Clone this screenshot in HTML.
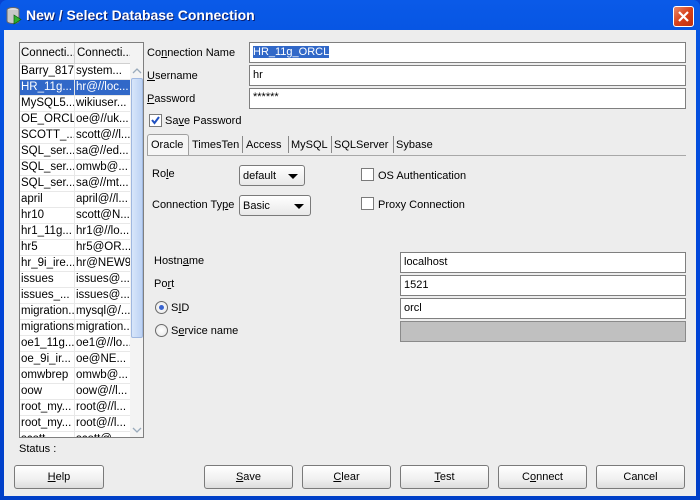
<!DOCTYPE html>
<html><head><meta charset="utf-8"><style>
*{margin:0;padding:0;box-sizing:border-box}
body{width:700px;height:500px;overflow:hidden;font-family:"Liberation Sans",sans-serif;font-size:11px;color:#000;background:#0842d0}
.win{position:absolute;left:0;top:0;width:700px;height:500px;background:linear-gradient(#0a5ae8,#0553e0 10%,#0044d8 60%,#0040c8);border-radius:7px 7px 0 0}
.title{position:absolute;left:26px;top:7px;color:#fff;font-weight:bold;font-size:14px;text-shadow:1px 1px 0 #0a1e6e}
.client{position:absolute;left:4px;top:30px;width:692px;height:466px;background:#ededed}
.a{position:absolute}
.inp{position:absolute;background:#fff;border:1px solid #7f7f7f;padding:0 3px;font-size:11px;line-height:19px}
.btn{position:absolute;top:465px;height:24px;border:1px solid #7a7a7a;border-radius:3px;background:linear-gradient(#fff,#f0f0f0 60%,#dcdcdc);text-align:center;line-height:22px;font-size:11px}
.list{position:absolute;left:19px;top:42px;width:125px;height:396px;border:1px solid #7f7f7f;background:#fff;overflow:hidden}
.row{position:absolute;left:0;width:110px;height:16px;font-size:11.5px;line-height:15px;border-bottom:1px solid #e8e8e8}
.row span{position:absolute;top:0;white-space:nowrap;overflow:hidden}
.c1{left:1px;width:53px}.c2{left:54px;width:56px;border-left:1px solid #e8e8e8;padding-left:1px}
.sel{background:#3168c8;color:#fff}
.cb{position:absolute;width:13px;height:13px;border:1px solid #7a7a7a;background:#fff}
.rb{position:absolute;width:13px;height:13px;border:1px solid #6a6a6a;border-radius:50%;background:radial-gradient(#fff,#e4e4e4)}
.combo{position:absolute;height:21px;border:1px solid #7a7a7a;border-radius:3px;background:linear-gradient(#fff,#e8e8e8);font-size:11px;padding-left:3px;line-height:21px}
.combo:after{content:"";position:absolute;right:6px;top:8px;border-left:5px solid transparent;border-right:5px solid transparent;border-top:5px solid #000}
.tab{position:absolute;top:139px;font-size:11px}
u{text-decoration:underline}
</style></head><body>
<div class="win"></div>
<svg class="a" style="left:5px;top:6px" width="18" height="20" viewBox="0 0 18 20"><ellipse cx="8" cy="4" rx="6" ry="2.5" fill="#ddd" stroke="#666"/><path d="M2 4v11c0 1.5 2.7 2.5 6 2.5s6-1 6-2.5V4" fill="#c8c8c8" stroke="#666"/><path d="M9 9l7 4.5-7 4.5z" fill="#2fb02f" stroke="#0a600a" stroke-width=".7"/></svg>
<div class="title">New / Select Database Connection</div>
<div class="a" style="left:673px;top:6px;width:21px;height:21px;border:1px solid #fff;border-radius:3px;background:linear-gradient(135deg,#e88a6a,#d8401a 50%,#c03010)"><svg width="19" height="19"><path d="M5 5l9 9M14 5l-9 9" stroke="#fff" stroke-width="2.2"/></svg></div>
<div class="client"></div>

<div class="list">
<div class="a" style="left:0;top:0;width:110px;height:21px;background:#f4f4f4;border-bottom:1px solid #d0d0d0;font-size:11.5px;line-height:21px"><span class="a" style="left:1px">Connecti...</span><span class="a" style="left:54px;top:0;height:21px;border-left:1px solid #d0d0d0;padding-left:2px">Connecti...</span></div>
<div class="a" style="left:110px;top:0;width:14px;height:396px;background:#f3f3f3"></div>
<div class="a" style="left:111px;top:35px;width:12px;height:260px;border:1px solid #a0b8e0;border-radius:2px;background:linear-gradient(90deg,#d8e6fa,#bcd2f4)"></div>
<svg class="a" style="left:112px;top:25px" width="10" height="6"><path d="M1 5l4-4 4 4" stroke="#9ab" fill="none" stroke-width="1.3"/></svg>
<svg class="a" style="left:112px;top:384px" width="10" height="6"><path d="M1 1l4 4 4-4" stroke="#9ab" fill="none" stroke-width="1.3"/></svg>
</div>

<div class="a" style="left:147px;top:47px">Co<u>n</u>nection Name</div>
<div class="inp" style="left:249px;top:42px;width:437px;height:21px"><span style="background:#3168c8;color:#fff">HR_11g_ORCL</span></div>
<div class="a" style="left:147px;top:70px"><u>U</u>sername</div>
<div class="inp" style="left:249px;top:65px;width:437px;height:21px">hr</div>
<div class="a" style="left:147px;top:93px"><u>P</u>assword</div>
<div class="inp" style="left:249px;top:88px;width:437px;height:21px;line-height:17px">******</div>
<div class="cb" style="left:149px;top:114px"><svg width="11" height="11"><path d="M2 5l2.5 3L9 2" stroke="#2050c0" stroke-width="2" fill="none"/></svg></div>
<div class="a" style="left:165px;top:115px">Sa<u>v</u>e Password</div>

<div class="a" style="left:147px;top:134px;width:42px;height:22px;border:1px solid #a0a0a0;border-bottom:none;border-radius:3px 3px 0 0;background:#f6f6f6"></div>
<div class="a" style="left:147px;top:155px;width:539px;height:1px;background:#a8a8a8"></div>
<div class="tab" style="left:151px">Oracle</div>
<div class="tab" style="left:192px">TimesTen</div>
<div class="a" style="left:242px;top:136px;width:1px;height:17px;background:#888"></div>
<div class="tab" style="left:246px">Access</div>
<div class="a" style="left:288px;top:136px;width:1px;height:17px;background:#888"></div>
<div class="tab" style="left:291px">MySQL</div>
<div class="a" style="left:331px;top:136px;width:1px;height:17px;background:#888"></div>
<div class="tab" style="left:334px">SQLServer</div>
<div class="a" style="left:393px;top:136px;width:1px;height:17px;background:#888"></div>
<div class="tab" style="left:396px">Sybase</div>

<div class="a" style="left:152px;top:168px">Ro<u>l</u>e</div>
<div class="combo" style="left:239px;top:165px;width:66px">default</div>
<div class="a" style="left:152px;top:199px">Connection Ty<u>p</u>e</div>
<div class="combo" style="left:239px;top:195px;width:72px">Basic</div>
<div class="cb" style="left:361px;top:168px"></div>
<div class="a" style="left:378px;top:170px">OS Authentication</div>
<div class="cb" style="left:361px;top:197px"></div>
<div class="a" style="left:378px;top:199px">Proxy Connection</div>

<div class="a" style="left:154px;top:255px">Hostn<u>a</u>me</div>
<div class="inp" style="left:400px;top:252px;width:286px;height:21px">localhost</div>
<div class="a" style="left:154px;top:278px">Po<u>r</u>t</div>
<div class="inp" style="left:400px;top:275px;width:286px;height:21px">1521</div>
<div class="rb" style="left:155px;top:301px"><div class="a" style="left:3px;top:3px;width:5px;height:5px;border-radius:50%;background:#3a64d0"></div></div>
<div class="a" style="left:171px;top:302px">S<u>I</u>D</div>
<div class="inp" style="left:400px;top:298px;width:286px;height:21px">orcl</div>
<div class="rb" style="left:155px;top:324px"></div>
<div class="a" style="left:171px;top:325px">S<u>e</u>rvice name</div>
<div class="inp" style="left:400px;top:321px;width:286px;height:21px;background:#c0c0c0;border-color:#8a8a8a"></div>

<div class="a" style="left:19px;top:443px">Status :</div>
<div class="btn" style="left:14px;width:90px"><u>H</u>elp</div>
<div class="btn" style="left:204px;width:89px"><u>S</u>ave</div>
<div class="btn" style="left:302px;width:89px"><u>C</u>lear</div>
<div class="btn" style="left:400px;width:89px"><u>T</u>est</div>
<div class="btn" style="left:498px;width:89px">C<u>o</u>nnect</div>
<div class="btn" style="left:596px;width:89px">Cancel</div>

<div class="a" style="left:20px;top:64px;width:110px;height:373px;overflow:hidden">
<div class="row" style="top:0"><span class="c1">Barry_817</span><span class="c2">system...</span></div>
<div class="row sel" style="top:16px"><span class="c1">HR_11g...</span><span class="c2">hr@//loc...</span></div>
<div class="row" style="top:32px"><span class="c1">MySQL5...</span><span class="c2">wikiuser...</span></div>
<div class="row" style="top:48px"><span class="c1">OE_ORCL</span><span class="c2">oe@//uk...</span></div>
<div class="row" style="top:64px"><span class="c1">SCOTT_...</span><span class="c2">scott@//l...</span></div>
<div class="row" style="top:80px"><span class="c1">SQL_ser...</span><span class="c2">sa@//ed...</span></div>
<div class="row" style="top:96px"><span class="c1">SQL_ser...</span><span class="c2">omwb@...</span></div>
<div class="row" style="top:112px"><span class="c1">SQL_ser...</span><span class="c2">sa@//mt...</span></div>
<div class="row" style="top:128px"><span class="c1">april</span><span class="c2">april@//l...</span></div>
<div class="row" style="top:144px"><span class="c1">hr10</span><span class="c2">scott@N...</span></div>
<div class="row" style="top:160px"><span class="c1">hr1_11g...</span><span class="c2">hr1@//lo...</span></div>
<div class="row" style="top:176px"><span class="c1">hr5</span><span class="c2">hr5@OR...</span></div>
<div class="row" style="top:192px"><span class="c1">hr_9i_ire...</span><span class="c2">hr@NEW9I</span></div>
<div class="row" style="top:208px"><span class="c1">issues</span><span class="c2">issues@...</span></div>
<div class="row" style="top:224px"><span class="c1">issues_...</span><span class="c2">issues@...</span></div>
<div class="row" style="top:240px"><span class="c1">migration...</span><span class="c2">mysql@/...</span></div>
<div class="row" style="top:256px"><span class="c1">migrations</span><span class="c2">migration...</span></div>
<div class="row" style="top:272px"><span class="c1">oe1_11g...</span><span class="c2">oe1@//lo...</span></div>
<div class="row" style="top:288px"><span class="c1">oe_9i_ir...</span><span class="c2">oe@NE...</span></div>
<div class="row" style="top:304px"><span class="c1">omwbrep</span><span class="c2">omwb@...</span></div>
<div class="row" style="top:320px"><span class="c1">oow</span><span class="c2">oow@//l...</span></div>
<div class="row" style="top:336px"><span class="c1">root_my...</span><span class="c2">root@//l...</span></div>
<div class="row" style="top:352px"><span class="c1">root_my...</span><span class="c2">root@//l...</span></div>
<div class="row" style="top:368px"><span class="c1">scott_...</span><span class="c2">scott@...</span></div>
</div>
</body></html>
